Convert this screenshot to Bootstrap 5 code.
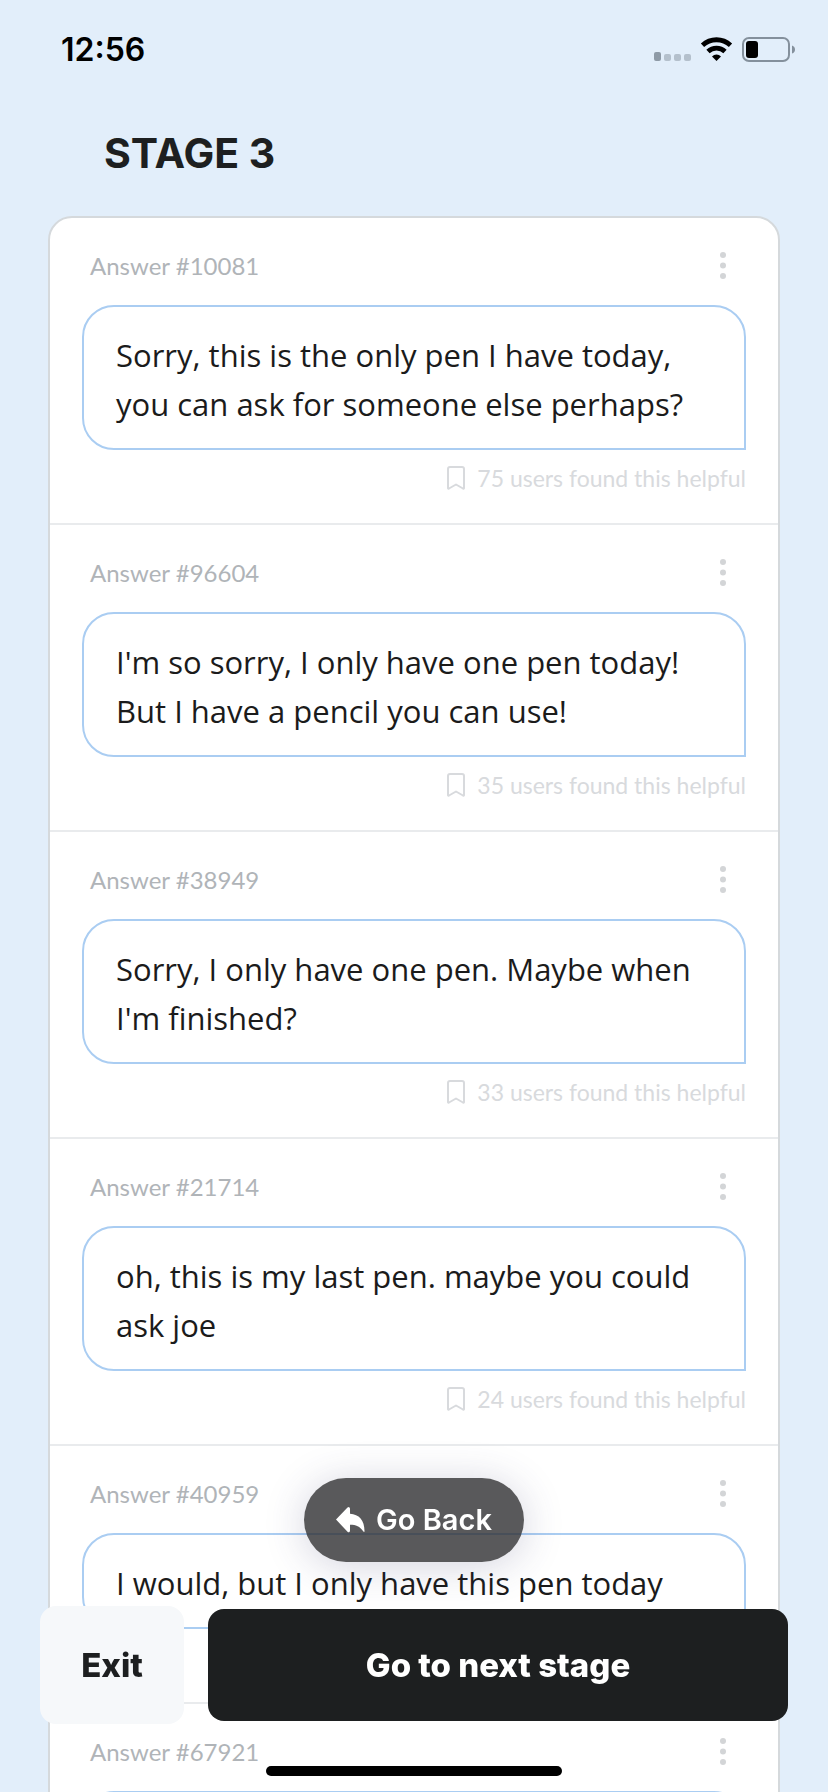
<!DOCTYPE html>
<html lang="en">
<head>
<meta charset="utf-8">
<meta name="viewport" content="width=device-width, initial-scale=1">
<title>Stage 3</title>
<link href="https://cdn.jsdelivr.net/npm/bootstrap@5.3.0/dist/css/bootstrap.min.css" rel="stylesheet">
<style>
  :root { --ink: #1d1f20; --line: #d5d9dc; --sky: #e2eefa; --bubble: #aacdf2; }
  body { background: var(--sky); color: var(--ink); font-family: Inter, sans-serif; }
  .screen { height: 100vh; overflow: hidden; }
  .status-bar { padding: 28px 33px 0 61px; height: 72px; color: #000; }
  .clock { font-size: 32px; line-height: 44px; font-weight: 600; }
  .stage-title { font-size: 41px; line-height: 48px; font-weight: 700; margin: 57px 104px 39px; }
  .answers { margin: 0 48px; border: 2px solid var(--line); border-radius: 24px; background: #fff; }
  .answer { border-bottom: 2px solid #e9ebed; padding: 0 32px 29px; }
  .answer-head { height: 87px; padding: 16px 16px 0 8px; }
  .answer-id { font: 400 24px/32px Lato, sans-serif; color: #b0b4b8; }
  .more-btn { color: #d3d5d7; line-height: 0; }
  .bubble { border: 2px solid var(--bubble); border-radius: 32px 32px 0 32px; padding: 24px 32px 19px; font: 400 31px/49px "Open Sans", sans-serif; color: #1b1b1b; white-space: nowrap; }
  .helpful { font: 400 23px/32px Lato, sans-serif; color: #d8dadd; margin-top: 12px; gap: 12px; }
  .back-btn, .back-btn:hover { background: rgba(48, 48, 50, .8); color: #fff; height: 84px; padding: 0 32px; gap: 11px; font-size: 29px; line-height: 36px; font-weight: 600; box-shadow: 0 4px 40px rgba(60, 60, 110, .22); margin-bottom: 44px; }
  .actions { padding: 0 40px; gap: 24px; margin-bottom: 42px; }
  .exit-btn, .exit-btn:hover { background: #f6f8fa; color: var(--ink); width: 144px; height: 118px; border-radius: 16px; font-size: 33px; line-height: 40px; font-weight: 800; }
  .next-btn, .next-btn:hover { background: var(--ink); color: #fff; height: 112px; border-radius: 16px; font-size: 33px; line-height: 40px; font-weight: 800; }
  .home-bar { width: 296px; height: 10px; background: #000; margin-bottom: 16px; }
</style>
</head>
<body>
<div class="screen">
  <header class="status-bar d-flex justify-content-between align-items-start">
    <span class="clock">12:56</span>
    <svg width="142" height="44" viewBox="0 0 142 44" aria-label="Signal, Wi-Fi and battery">
      <rect x="1" y="24" width="7" height="9" rx="2" fill="#8e9aa6"/>
      <g fill="#b4c0cc"><rect x="11" y="26" width="7" height="7" rx="2"/><rect x="21" y="26" width="7" height="7" rx="2"/><rect x="31" y="26" width="7" height="7" rx="2"/></g>
      <g fill="none" stroke="#000" stroke-width="4.8"><path d="M49.500 17.300a20.500 20.500 0 0 1 28 0"/><path d="M55 23.500a12.500 12.500 0 0 1 17 0"/></g>
      <path d="M63.500 33l-4.500-4.600a6.500 6.500 0 0 1 9 0z"/>
      <rect x="90" y="10" width="46" height="23" rx="6" fill="none" stroke="#84909c" stroke-width="2"/>
      <rect x="93" y="13" width="12" height="17" rx="3"/>
      <path d="M139 17.500q3 1 3 4t-3 4z" fill="#84909c"/>
    </svg>
  </header>
  <h1 class="stage-title">STAGE 3</h1>
  <main class="answers" id="answers"></main>
</div>

<div class="fixed-bottom d-flex flex-column align-items-center">
  <button type="button" class="back-btn btn border-0 rounded-pill d-inline-flex align-items-center">
    <svg width="29" height="26" viewBox="0 0 29 26" fill="currentColor" aria-hidden="true"><path d="M0 12.500L11.500.6q2-1.400 2.500 1V6.700C23 7.300 28.500 13 28.500 24q0 2-1.500 0c-3-4.500-7-6.300-13-6.300v6q-.5 2.500-2.500 1z"/></svg>
    Go Back
  </button>
  <div class="actions d-flex align-items-center w-100">
    <button type="button" class="exit-btn btn border-0">Exit</button>
    <button type="button" class="next-btn btn border-0 flex-grow-1">Go to next stage</button>
  </div>
  <div class="home-bar rounded-pill"></div>
</div>

<script src="https://cdn.jsdelivr.net/npm/bootstrap@5.3.0/dist/js/bootstrap.bundle.min.js"></script>
<script>
  const answers = [
    [10081, ["Sorry, this is the only pen I have today,", "you can ask for someone else perhaps?"], 75],
    [96604, ["I'm so sorry, I only have one pen today!", "But I have a pencil you can use!"], 35],
    [38949, ["Sorry, I only have one pen. Maybe when", "I'm finished?"], 33],
    [21714, ["oh, this is my last pen. maybe you could", "ask joe"], 24],
    [40959, ["I would, but I only have this pen today"], null],
    [67921, [""], null]
  ];
  document.getElementById("answers").innerHTML = answers.map(([id, lines, users]) => `
    <article class="answer">
      <div class="answer-head d-flex justify-content-between align-items-start">
        <span class="answer-id mt-3">Answer #${id}</span>
        <button type="button" class="more-btn btn border-0 p-0 mt-3" aria-label="More options for answer ${id}">
          <svg width="14" height="32" viewBox="0 0 14 32" fill="currentColor"><circle cx="7" cy="5" r="3"/><circle cx="7" cy="15.500" r="3"/><circle cx="7" cy="26" r="3"/></svg>
        </button>
      </div>
      <div class="bubble">${lines.join("<br>") || "&nbsp;"}</div>
      <div class="helpful d-flex justify-content-end align-items-center">
        ${users === null ? "&nbsp;" : `<svg width="18" height="24" viewBox="0 0 18 24" fill="none" stroke="currentColor" stroke-width="2" stroke-linejoin="round" aria-hidden="true"><path d="M1 3q0-2 2-2h12q2 0 2 2v19q0 1-1 .500l-7-4-7 4q-1 .500-1-.500z"/></svg>
        <span>${users} users found this helpful</span>`}
      </div>
    </article>`).join("");
</script>
</body>
</html>
